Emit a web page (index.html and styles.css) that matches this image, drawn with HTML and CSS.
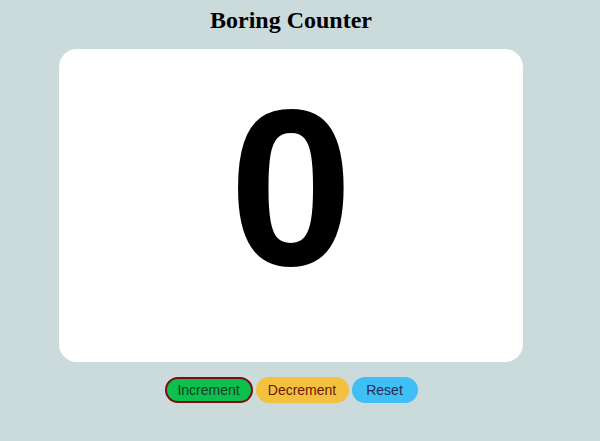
FILE: index.html
```html
<!DOCTYPE html>
<html>
<head>
<meta charset="utf-8">
<link rel="stylesheet" href="styles.css">
</head>
<body>
<div class="page">
  <h1 class="title">Boring Counter</h1>
  <div class="card"><span class="count">0</span></div>
  <div class="controls">
    <button class="btn btn-inc">Increment</button>
    <button class="btn btn-dec">Decrement</button>
    <button class="btn btn-reset">Reset</button>
  </div>
</div>
</body>
</html>
```
FILE: styles.css
```css
html, body {
  margin: 0;
  padding: 0;
}
body {
  background: #cbdada;
  width: 600px;
  height: 441px;
  overflow: hidden;
  font-family: "Liberation Sans", Arial, sans-serif;
}
.page {
  width: 582px;
}
.title {
  font-family: "Liberation Serif", "Times New Roman", serif;
  font-size: 24px;
  font-weight: bold;
  text-align: center;
  margin: 7px 0 0 0;
  line-height: 27px;
  color: #000;
}
.card {
  width: 464px;
  height: 313px;
  margin: 15px auto 0 auto;
  background: #fff;
  border-radius: 18px;
  display: flex;
  align-items: center;
  justify-content: center;
}
.count {
  font-family: "Liberation Sans", Arial, sans-serif;
  font-weight: bold;
  font-size: 222px;
  line-height: 1;
  color: #000;
  position: relative;
  top: -18px;
}
.controls {
  display: flex;
  justify-content: center;
  gap: 3px;
  margin-top: 15px;
}
.btn {
  font-family: "Liberation Sans", Arial, sans-serif;
  font-size: 14px;
  height: 26px;
  border-radius: 13px;
  border: 2px solid transparent;
  padding: 0;
  cursor: pointer;
}
.btn-inc {
  background: #0cbf4e;
  color: #1a3d22;
  border-color: #7a0d0d;
  width: 88px;
}
.btn-dec {
  background: #f2c140;
  color: #6b1a0a;
  width: 93px;
}
.btn-reset {
  background: #3fbff5;
  color: #2a2a50;
  width: 66px;
}
```
